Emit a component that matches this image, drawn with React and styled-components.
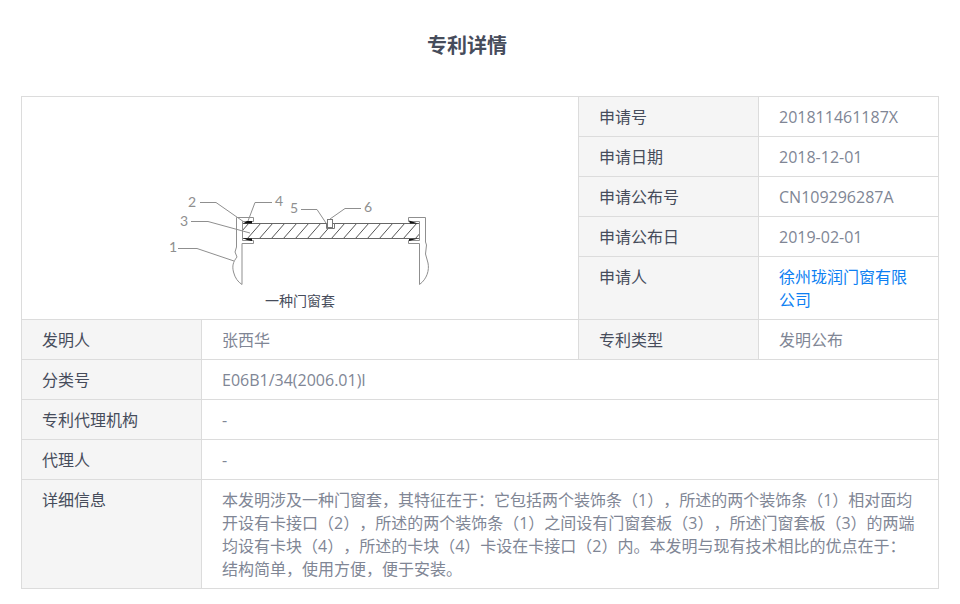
import React from "react";
import styled, { createGlobalStyle } from "styled-components";

const GlobalStyle = createGlobalStyle`
  * {
    box-sizing: border-box;
  }

  body {
    margin: 0;
    background: #fff;
    color: #464c5b;
    font-family: "Open Sans", "Noto Sans CJK SC", sans-serif;
    font-size: 16px;
    line-height: 23px;
    text-spacing-trim: space-all;
  }
`;

const side = [
  { label: "申请号", value: "201811461187X" },
  { label: "申请日期", value: "2018-12-01" },
  { label: "申请公布号", value: "CN109296287A" },
  { label: "申请公布日", value: "2019-02-01" },
  { label: "申请人", value: "徐州珑润门窗有限公司", href: "#applicant" }
];

const rows = [
  { label: "分类号", value: "E06B1/34(2006.01)I" },
  { label: "专利代理机构", value: "-" },
  { label: "代理人", value: "-" },
  {
    label: "详细信息",
    value:
      "本发明涉及一种门窗套，其特征在于：它包括两个装饰条（1），所述的两个装饰条（1）相对面均开设有卡接口（2），所述的两个装饰条（1）之间设有门窗套板（3），所述门窗套板（3）的两端均设有卡块（4），所述的卡块（4）卡设在卡接口（2）内。本发明与现有技术相比的优点在于：结构简单，使用方便，便于安装。"
  }
];

const hatches = Array.from({ length: 17 }, (_, i) => 235 + i * 12);

const marks = [
  { n: "2", x: 188, y: 207, line: "200,202.5 216,202.5 244,222" },
  { n: "3", x: 180, y: 226, line: "191,221.5 208,221.5 250,233" },
  { n: "1", x: 169, y: 252, line: "178,248.5 197,248.5 234,261" },
  { n: "4", x: 275, y: 206, line: "272,202.5 255,202.5 248,221" },
  { n: "5", x: 290, y: 213, line: "301,209.5 317,209.5 326,223" },
  { n: "6", x: 364, y: 212, line: "361,208.5 345,208.5 330,219" }
];

function Drawing() {
  return (
    <Figure viewBox="168 191 264 100" role="img" aria-label="一种门窗套">
      <clipPath id="board">
        <rect x="242" y="223" width="177" height="15" />
      </clipPath>
      <g clipPath="url(#board)" stroke="#555">
        {hatches.map(x => (
          <line key={x} x1={x} y1="239" x2={x + 14} y2="223" />
        ))}
      </g>
      <g stroke="#666">
        <path d="M242 223.5H419M242 238.5H419" />
        <path d="M242.5 223V239M419.5 223V239" stroke="#333" />
      </g>
      <g stroke="#8f8f8f">
        <path d="M242 284.5V243.5H253.5V240.5H242.5V221.5H253.5V217.5H236.5V247L235 252L237 257C233 262 232 266 233.5 272C235 278 238 282 242 284.5" />
        <path d="M419.5 284.5V243.5H408.5V240.5H419.5V221.5H408.5V217.5H425.5V242L426.5 245L425.5 254L428 263C429.5 270 427 279 419.5 284.5" />
      </g>
      <g fill="#111" stroke="none">
        <path d="M243 223.5L247 221H252V223.5Z" />
        <path d="M243 238L252 238.5V241L247 240Z" />
        <path d="M409 220.5L418 223.5H410Z" />
        <path d="M409 241V239L418 238.5Z" />
      </g>
      <path d="M326.5 223V228.5H334.5V223" stroke="#777" />
      <rect x="327.5" y="219.5" width="5" height="8" fill="#fff" stroke="#777" />
      {marks.map(({ n, x, y, line }) => (
        <g key={n}>
          <polyline points={line} stroke="#8f8f8f" />
          <text x={x} y={y}>
            {n}
          </text>
        </g>
      ))}
    </Figure>
  );
}

export default function App() {
  return (
    <Page>
      <GlobalStyle />
      <Title>专利详情</Title>
      <Table>
        <colgroup>
          <col width="180" />
          <col />
          <col width="180" />
          <col width="180" />
        </colgroup>
        <tbody>
          {side.map(({ label, value, href }, i) => (
            <tr key={label}>
              {i === 0 && (
                <PictureCell colSpan={2} rowSpan={side.length}>
                  <Drawing />
                  <Caption>一种门窗套</Caption>
                </PictureCell>
              )}
              <Label scope="row">{label}</Label>
              <Value>{href ? <Applicant href={href}>{value}</Applicant> : value}</Value>
            </tr>
          ))}
          <tr>
            <Label scope="row">发明人</Label>
            <Value>张西华</Value>
            <Label scope="row">专利类型</Label>
            <Value>发明公布</Value>
          </tr>
          {rows.map(({ label, value }) => (
            <tr key={label}>
              <Label scope="row">{label}</Label>
              <Value colSpan={3}>{value}</Value>
            </tr>
          ))}
        </tbody>
      </Table>
    </Page>
  );
}

const Page = styled.main`
  padding: 31px 21px 16px;
`;

const Title = styled.h1`
  margin: 0 0 35px;
  padding-right: 26px;
  font-size: 20px;
  line-height: 30px;
  font-weight: 700;
  text-align: center;
`;

const Table = styled.table`
  width: 100%;
  table-layout: fixed;
  border-collapse: collapse;

  th,
  td {
    border: 1px solid #dcdcdc;
    padding: 9px 20px 7px;
    vertical-align: top;
    text-align: left;
  }
`;

const Label = styled.th`
  background: #f5f5f5;
  font-weight: 400;
`;

const Value = styled.td`
  color: #808695;
`;

const PictureCell = styled.td`
  &&& {
    padding: 8px 20px;
    vertical-align: bottom;
    text-align: center;
  }
`;

const Figure = styled.svg`
  display: block;
  width: 264px;
  height: 100px;
  margin: 0 auto;
  fill: none;
  stroke-width: 1;

  text {
    fill: #8f8f8f;
    font-family: Lato, sans-serif;
    font-size: 14px;
    font-weight: 400;
  }
`;

const Caption = styled.p`
  margin: 0;
  font-size: 14px;
  line-height: 20px;
`;

const Applicant = styled.a`
  color: #0d7ff2;
  text-decoration: none;
`;
